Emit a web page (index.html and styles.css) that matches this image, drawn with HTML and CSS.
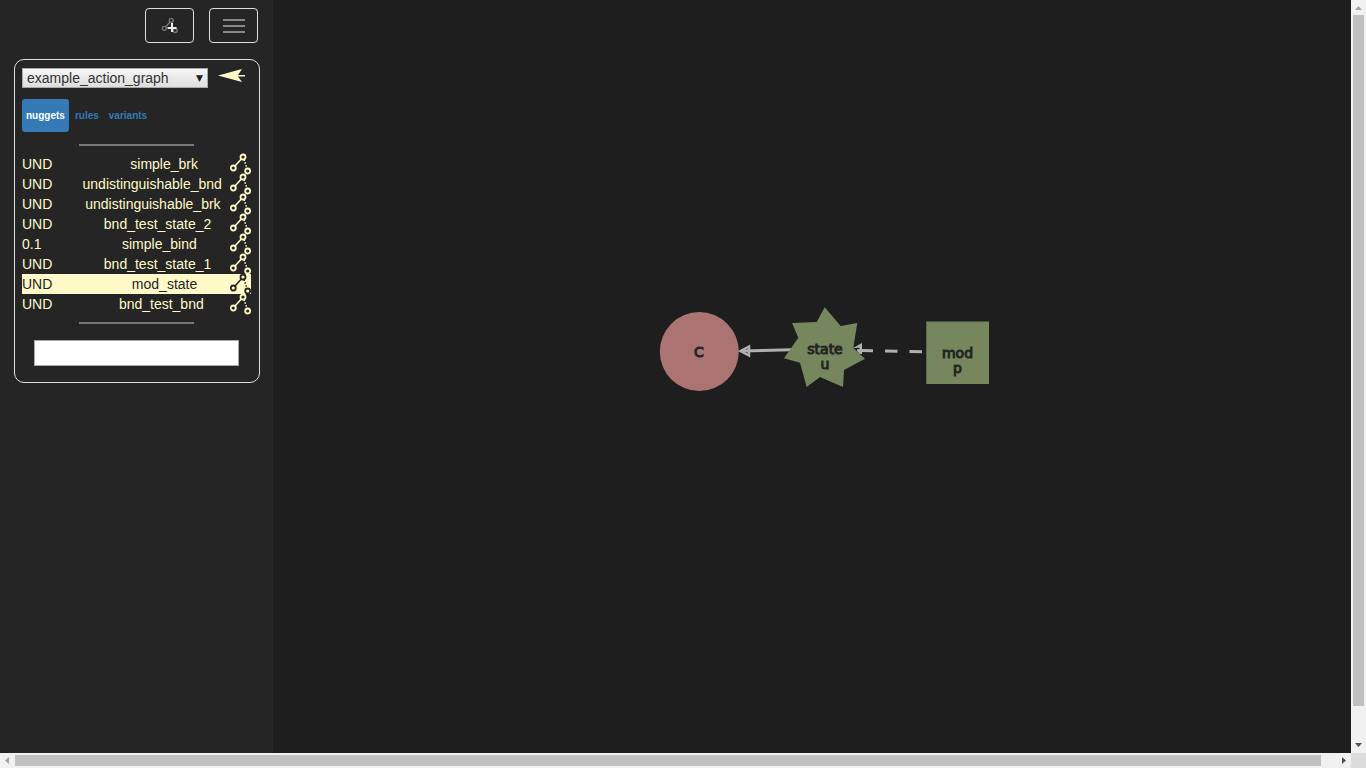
FILE: index.html
```html
<!DOCTYPE html>
<html lang="en">
<head>
<meta charset="utf-8">
<title>Graph editor</title>
<link rel="stylesheet" href="styles.css">
</head>
<body>
<svg width="0" height="0" class="defs" aria-hidden="true">
  <symbol id="nugget" viewBox="0 0 21 22">
    <g fill="none" stroke="currentColor" stroke-width="1.8">
      <circle cx="3.3" cy="15" r="2.5"/>
      <circle cx="13" cy="4" r="2.5"/>
      <circle cx="17.7" cy="18" r="2.5"/>
      <path d="M5 13 11.3 6" stroke-width="1.6"/>
      <path d="M14 6.5 17 15.5" stroke-width="1.5" stroke-dasharray="1.5 1.5"/>
    </g>
  </symbol>
</svg>
<div class="frame">
  <div class="app">
    <aside class="sidebar">
      <header class="toolbar">
        <button class="tool" aria-label="Add nugget">
          <svg width="17" height="17" viewBox="0 0 17 17" fill="none" stroke="#777" stroke-width="1.3">
            <circle cx="3.3" cy="11.3" r="2"/><circle cx="10.3" cy="3.3" r="2"/><circle cx="14.2" cy="13.5" r="2"/>
            <path d="M4.8 9.7 9 5"/>
            <path d="M11 6v9M6.5 11h9" stroke="#eee" stroke-width="2"/>
          </svg>
        </button>
        <button class="tool" aria-label="Menu">
          <svg width="22" height="15" viewBox="0 0 22 15" fill="none" stroke="#888" stroke-width="2"><path d="M0 2h22M0 8h22M0 14h22"/></svg>
        </button>
      </header>
      <section class="panel">
        <div class="picker">
          <div class="select">
            <select aria-label="Graph"><option>example_action_graph</option></select>
          </div>
          <button class="back" aria-label="Back">
            <svg width="27" height="15" viewBox="0 0 27 15"><path d="M0 7.5 24 1 20 7H27V8.5H20L24 14Z" fill="#fffac8"/></svg>
          </button>
        </div>
        <nav class="tabs">
          <a href="#nuggets" class="tab active">nuggets</a>
          <a href="#rules" class="tab">rules</a>
          <a href="#variants" class="tab">variants</a>
        </nav>
        <hr>
        <ul class="list">
          <li><span class="rate">UND</span><span class="name">simple_brk</span><svg class="icon"><use href="#nugget"/></svg></li>
          <li><span class="rate">UND</span><span class="name">undistinguishable_bnd</span><svg class="icon"><use href="#nugget"/></svg></li>
          <li><span class="rate">UND</span><span class="name">undistinguishable_brk</span><svg class="icon"><use href="#nugget"/></svg></li>
          <li><span class="rate">UND</span><span class="name">bnd_test_state_2</span><svg class="icon"><use href="#nugget"/></svg></li>
          <li><span class="rate">0.1</span><span class="name">simple_bind</span><svg class="icon"><use href="#nugget"/></svg></li>
          <li><span class="rate">UND</span><span class="name">bnd_test_state_1</span><svg class="icon"><use href="#nugget"/></svg></li>
          <li class="selected"><span class="rate">UND</span><span class="name">mod_state</span><svg class="icon"><use href="#nugget"/></svg></li>
          <li><span class="rate">UND</span><span class="name">bnd_test_bnd</span><svg class="icon"><use href="#nugget"/></svg></li>
        </ul>
        <hr>
        <input class="search" type="text" aria-label="New nugget name">
      </section>
    </aside>
    <main class="canvas">
      <svg class="graph" viewBox="273 0 1078 753" role="img" aria-label="Nugget graph">
        <g stroke="#b0b0b0" stroke-width="3" fill="none">
          <path d="M741 351 800 349.5"/>
          <path d="M740.5 351 749 346.5V355.5Z" stroke-width="2.5"/>
        </g>
        <circle cx="699.3" cy="351.6" r="39.5" fill="#ab7472"/>
        <path fill="#76865d" d="M824.7 307.3 840.7 326 857.3 323 853.3 348 865 358.7 844 370 843 387 820 377 806.7 387 800 362.7 784 358.3 798.3 337.7 792 323 816.7 322Z"/>
        <g stroke="#b0b0b0" stroke-width="3" fill="none">
          <path d="M922 351.7 860 350.5" stroke-dasharray="12.5 12"/>
          <path d="M853 348 862 343V354H860L857 351V348Z" fill="#b0b0b0" stroke="none"/>
          <path d="M857 348.5H859.5" stroke="#1e1e1e" stroke-width="1.5"/>
        </g>
        <rect x="926.3" y="321.5" width="62.7" height="62.5" fill="#76865d"/>
        <g class="labels">
          <text x="699" y="357">C</text>
          <text x="825" y="354">state</text>
          <text x="825" y="369">u</text>
          <text x="957.5" y="358">mod</text>
          <text x="957.5" y="373">p</text>
        </g>
      </svg>
    </main>
  </div>
  <div class="bar vertical" aria-hidden="true">
    <svg width="15" height="15"><path d="M4 10 7.5 6 11 10Z" fill="#a3a3a3"/></svg>
    <div class="rail"><div class="thumb"></div></div>
    <svg width="15" height="15"><path d="M4 5H11L7.5 9Z" fill="#505050"/></svg>
  </div>
  <div class="bar horizontal" aria-hidden="true">
    <svg width="15" height="15"><path d="M9 4V11L5 7.5Z" fill="#a3a3a3"/></svg>
    <div class="rail"><div class="thumb"></div></div>
    <svg width="15" height="15"><path d="M6 4V11L10 7.5Z" fill="#505050"/></svg>
  </div>
  <div class="corner"></div>
</div>
</body>
</html>
```
FILE: styles.css
```css
* { box-sizing: border-box; }
body {
  margin: 0;
  font: 14px/20px "Liberation Sans", Arial, sans-serif;
  color: #fffac8;
  background: #1e1e1e;
}
button { padding: 0; background: none; border: 0; cursor: pointer; }
svg { display: block; }
.defs { position: absolute; }

.frame {
  display: grid;
  grid-template: minmax(0, 1fr) 15px / minmax(0, 1fr) 15px;
  height: 100vh;
}
.app { display: flex; min-height: 0; }

.sidebar {
  flex: none;
  width: 273px;
  padding: 8px 13px 0 14px;
  background: #252525;
}
.toolbar {
  display: flex;
  justify-content: flex-end;
  gap: 15px;
  padding-right: 2px;
  margin-bottom: 16px;
}
.tool {
  display: flex;
  align-items: center;
  justify-content: center;
  width: 49px;
  height: 35px;
  border: 1px solid #ddd;
  border-radius: 4px;
}
.panel {
  padding: 8px 8px 16px 7px;
  border: 1px solid #ddd;
  border-radius: 10px;
}
.picker { display: flex; gap: 10px; }
.select { position: relative; width: 186px; }
.select::after {
  content: "▼";
  position: absolute;
  right: 5px;
  top: 0;
  font: 9px/20px "DejaVu Sans", sans-serif;
  color: #222;
  pointer-events: none;
}
.select select {
  display: block;
  width: 100%;
  height: 20px;
  padding: 0 4px;
  appearance: none;
  border: 1px solid #a9a9a9;
  border-radius: 0;
  background: linear-gradient(#f6f6f6, #dedede);
  font: inherit;
  line-height: 18px;
  color: #333;
}
.back { height: 15px; }
.tabs { display: flex; gap: 2px; margin: 11px 0 12px; }
.tab {
  padding: 0 4px;
  border-radius: 3px;
  font-size: 10px;
  font-weight: bold;
  line-height: 33px;
  color: #337ab7;
  text-decoration: none;
}
.tab.active { color: #fff; background: #337ab7; }
hr {
  width: 50%;
  height: 2px;
  margin: 0 auto;
  border: 0;
  background: #777;
}
.list { margin: 8px 0; padding: 0; list-style: none; }
.list li { display: flex; height: 20px; }
.list .selected { color: #252525; background: #fffac8; }
.rate { flex: 1 0 auto; padding-right: 14px; }
.name { flex: 2 0 auto; text-align: center; }
.icon { flex: none; width: 21px; height: 22px; margin-top: -1px; }
.search {
  display: block;
  width: calc(100% - 24px);
  height: 26px;
  margin: 16px 12px 0;
  padding: 2px 4px;
  border: 1px solid #a9a9a9;
  background: #fff;
  font: inherit;
}

.canvas { flex: 1; min-width: 0; background: #1e1e1e; }
.graph { width: 100%; height: 100%; }
.labels {
  font: 14px "DejaVu Sans", sans-serif;
  text-anchor: middle;
  fill: #252525;
  stroke: #252525;
  stroke-width: 1px;
}

.bar { display: flex; background: #f1f1f1; }
.rail { flex: 1; }
.thumb { background: #c1c1c1; }
.vertical { flex-direction: column; }
.vertical .rail { padding: 0 2px; }
.vertical .thumb { height: 95.6%; }
.horizontal .rail { padding: 2px 0; }
.horizontal .thumb { width: 98.9%; height: 11px; }
.corner { background: #dcdcdc; }
```
